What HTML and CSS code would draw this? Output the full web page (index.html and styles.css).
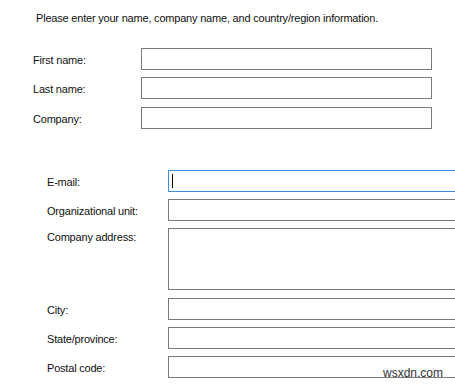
FILE: index.html
```html
<!DOCTYPE html>
<html>
<head>
<meta charset="utf-8">
<link rel="stylesheet" href="styles.css">
</head>
<body>
<div class="page">
  <p class="intro">Please enter your name, company name, and country/region information.</p>

  <div class="form form-top">
    <label class="lbl">First name:</label>
    <div class="box"></div>
    <label class="lbl">Last name:</label>
    <div class="box"></div>
    <label class="lbl row-gap-extra">Company:</label>
    <div class="box row-gap-extra"></div>
  </div>

  <div class="form form-bottom">
    <label class="lbl">E-mail:</label>
    <div class="box box-focus"><span class="caret"></span></div>
    <label class="lbl">Organizational unit:</label>
    <div class="box"></div>
    <label class="lbl lbl-top">Company address:</label>
    <div class="box box-area"></div>
    <label class="lbl row-gap-extra">City:</label>
    <div class="box row-gap-extra"></div>
    <label class="lbl">State/province:</label>
    <div class="box"></div>
    <label class="lbl">Postal code:</label>
    <div class="box"></div>
  </div>

  <div class="watermark">wsxdn.com</div>
</div>
</body>
</html>
```

FILE: styles.css
```css
html, body {
  margin: 0;
  padding: 0;
  background: #ffffff;
  overflow: hidden;
}

.page {
  position: relative;
  width: 455px;
  height: 384px;
  overflow: hidden;
  font-family: "Liberation Sans", Arial, sans-serif;
  font-size: 11px;
  letter-spacing: -0.2px;
  color: #111111;
}

.intro {
  margin: 0;
  padding: 12px 0 0 36px;
  line-height: 13px;
  height: 13px;
}

.form {
  display: grid;
  row-gap: 7px;
  align-items: center;
}

.form-top {
  margin-top: 23px;
  padding-left: 33px;
  grid-template-columns: 108px 291px;
}

.form-bottom {
  margin-top: 41px;
  padding-left: 47px;
  grid-template-columns: 121px 320px;
}

.lbl {
  display: block;
  line-height: 13px;
  padding-top: 2px;
  white-space: nowrap;
}

.lbl-top {
  align-self: start;
  padding-top: 3px;
}

.row-gap-extra {
  margin-top: 1px;
}

.box {
  box-sizing: border-box;
  height: 22px;
  border: 1px solid #7a7a7a;
  background: #ffffff;
  position: relative;
}

.box-focus {
  border-color: #3d8fd6;
}

.caret {
  position: absolute;
  left: 3px;
  top: 3px;
  width: 1px;
  height: 14px;
  background: #000000;
}

.box-area {
  height: 62px;
}

.watermark {
  position: absolute;
  left: 383px;
  top: 366px;
  font-size: 12px;
  line-height: 14px;
  letter-spacing: 0;
  color: #333333;
}
```
